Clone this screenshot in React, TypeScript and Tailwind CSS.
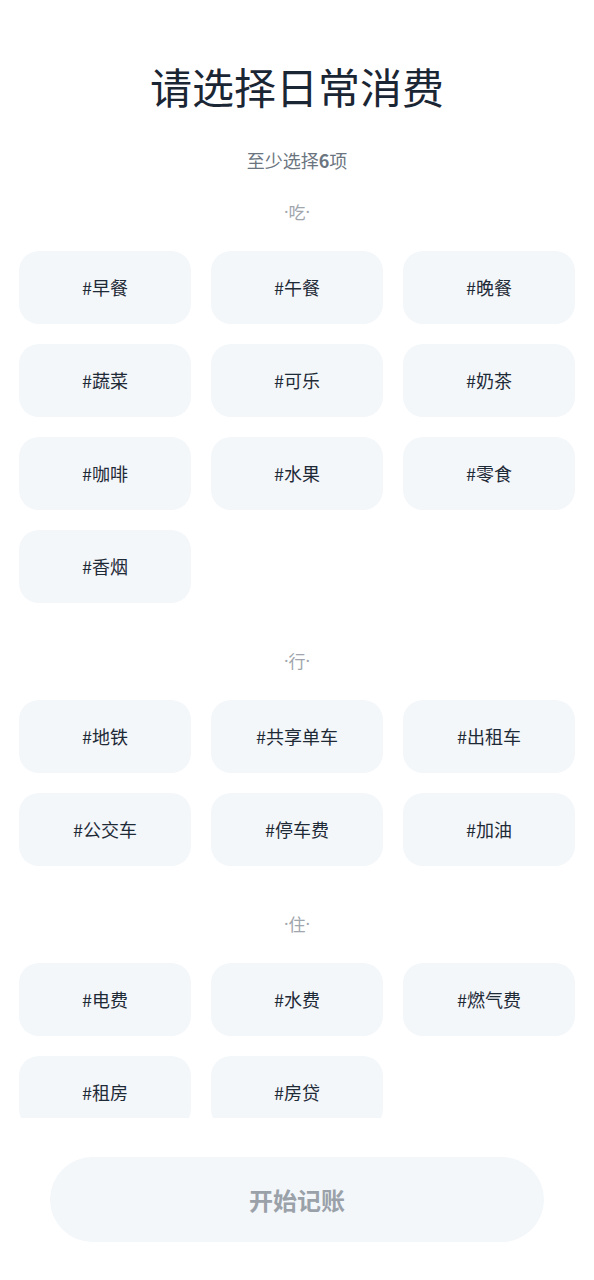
const sections = [
  { name: '吃', items: ['早餐', '午餐', '晚餐', '蔬菜', '可乐', '奶茶', '咖啡', '水果', '零食', '香烟'] },
  { name: '行', items: ['地铁', '共享单车', '出租车', '公交车', '停车费', '加油'] },
  { name: '住', items: ['电费', '水费', '燃气费', '租房', '房贷'] },
];

export default function App() {
  return (
    <div
      className="h-screen flex flex-col bg-white"
      style={{ fontFamily: '"Noto Sans CJK SC", "Noto Sans", sans-serif' }}
    >
      {/* Scroll area */}
      <div className="flex-1 overflow-hidden px-[19px]">
        <h1 className="pt-[58px] text-center text-[42px] leading-[56px] text-[#1b2634]">请选择日常消费</h1>
        <p className="mt-[34px] text-center text-[18px] leading-6 text-[#6b7580]">
          至少选择<span className="font-bold">6</span>项
        </p>

        {sections.map((section, i) => (
          <div key={section.name} className={i === 0 ? 'mt-[28px]' : 'mt-[46px]'}>
            <div className="h-6 flex items-center justify-center text-[17px] leading-6 text-[#a0a6ad]">
              <span className="font-['Noto_Sans',sans-serif]">·</span>
              <span>{section.name}</span>
              <span className="font-['Noto_Sans',sans-serif]">·</span>
            </div>
            <div className="mt-[27px] grid grid-cols-3 gap-5">
              {section.items.map((item) => (
                <button
                  key={item}
                  className="h-[73px] rounded-[20px] bg-[#f3f7fa] text-[18px] text-[#1f2a37]"
                >
                  #{item}
                </button>
              ))}
            </div>
          </div>
        ))}
      </div>

      {/* Footer */}
      <div className="h-[162px] shrink-0 flex items-start justify-center pt-[39px]">
        <button className="w-[494px] h-[85px] rounded-full bg-[#f3f7fa] text-[24px] font-bold text-[#9aa1a9]">
          开始记账
        </button>
      </div>
    </div>
  );
}
